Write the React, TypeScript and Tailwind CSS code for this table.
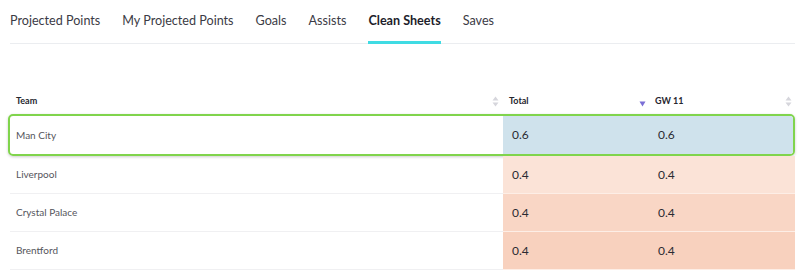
type Row = { team: string; total: string; gw: string; tone: string };

const tabs = ["Projected Points", "My Projected Points", "Goals", "Assists", "Clean Sheets", "Saves"];
const active = "Clean Sheets";

const rows: Row[] = [
  { team: "Man City", total: "0.6", gw: "0.6", tone: "bg-[#cfe2ec]" },
  { team: "Liverpool", total: "0.4", gw: "0.4", tone: "bg-[#fbe3d7]" },
  { team: "Crystal Palace", total: "0.4", gw: "0.4", tone: "bg-[#f9d6c5]" },
  { team: "Brentford", total: "0.4", gw: "0.4", tone: "bg-[#f8d1be]" },
];

function SortIcon() {
  return (
    <svg width="7" height="11" viewBox="0 0 7 11" className="shrink-0">
      <path d="M3.5 0.5 L6.5 4.5 H0.5 Z" fill="#d6d6dc" />
      <path d="M3.5 10.5 L6.5 6.5 H0.5 Z" fill="#d6d6dc" />
    </svg>
  );
}

function SortDown() {
  return (
    <svg width="7" height="6" viewBox="0 0 7 6" className="shrink-0 mt-[5px]">
      <path d="M0.5 0.5 H6.5 L3.5 5.5 Z" fill="#7b6fd6" />
    </svg>
  );
}

export default function App() {
  return (
    <div className="w-[800px] h-[271px] overflow-hidden bg-white font-['Lato','Noto_Sans',sans-serif]">
      <nav className="mx-[10px] w-[785px] flex gap-[22px] border-b border-[#ebedf0] h-[44px]">
        {tabs.map((t) => (
          <div
            key={t}
            className={
              t === active
                ? "pt-[12px] text-[12.6px] font-bold text-[#1d1d2b] border-b-[3px] border-[#3fdbe3] -mb-px"
                : "pt-[12px] text-[12.6px] text-[#3b3b45]"
            }
          >
            {t}
          </div>
        ))}
      </nav>

      <div className="mt-[44px] ml-[8px] w-[787px]">
        <div className="grid grid-cols-[495px_147px_145px] h-[26px] items-center text-[9px] font-bold text-[#26262e]">
          <div className="flex items-center justify-between pl-[8px] pr-[4px]">
            <span>Team</span>
            <SortIcon />
          </div>
          <div className="flex items-center justify-between pl-[6px] pr-[4px]">
            <span>Total</span>
            <SortDown />
          </div>
          <div className="flex items-center justify-between pl-[5px] pr-[3px]">
            <span>GW 11</span>
            <SortIcon />
          </div>
        </div>

        {rows.map((r, i) =>
          i === 0 ? (
            <div
              key={r.team}
              className="grid grid-cols-[493px_147px_143px] h-[42px] border-2 border-[#80d44c] rounded-[5px] overflow-hidden shadow-[0_1px_3px_rgba(0,0,0,0.2)]"
            >
              <div className="flex items-center pl-[6px] text-[10px] text-[#55555c]">{r.team}</div>
              <div className={`flex items-center pl-[9px] text-[12px] text-[#2a2a33] ${r.tone}`}>{r.total}</div>
              <div className={`flex items-center pl-[8px] text-[12px] text-[#2a2a33] ${r.tone}`}>{r.gw}</div>
            </div>
          ) : (
            <div key={r.team} className="grid grid-cols-[495px_147px_145px] h-[38px]">
              <div className="flex items-center pl-[6px] ml-[2px] text-[10px] text-[#55555c] border-b border-[#f0f0f2]">
                {r.team}
              </div>
              <div className={`flex items-center pl-[9px] text-[12px] text-[#2a2a33] border-b border-[#fdeee6] ${r.tone}`}>
                {r.total}
              </div>
              <div className={`flex items-center pl-[8px] text-[12px] text-[#2a2a33] border-b border-[#fdeee6] ${r.tone}`}>
                {r.gw}
              </div>
            </div>
          )
        )}
      </div>
    </div>
  );
}
